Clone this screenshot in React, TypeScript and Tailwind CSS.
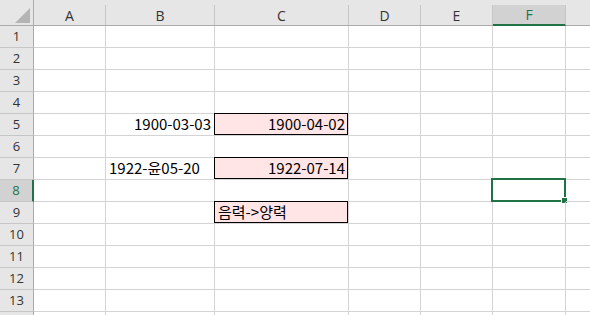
import React from 'react'

const cols = [
  { key: 'A', w: 'w-[72px]' },
  { key: 'B', w: 'w-[109px]' },
  { key: 'C', w: 'w-[134px]' },
  { key: 'D', w: 'w-[72px]' },
  { key: 'E', w: 'w-[72px]' },
  { key: 'F', w: 'w-[73px]' },
  { key: 'G', w: 'w-[73px]' },
]

type Cell = { text: string; align?: 'left' | 'right'; boxed?: boolean }

// sheet contents keyed by "row-col"
const data: Record<string, Cell> = {
  '5-B': { text: '1900-03-03', align: 'right' },
  '5-C': { text: '1900-04-02', align: 'right', boxed: true },
  '7-B': { text: '1922-윤05-20', align: 'left' },
  '7-C': { text: '1922-07-14', align: 'right', boxed: true },
  '9-C': { text: '음력->양력', align: 'left', boxed: true },
}

const activeRow = 8
const activeCol = 'F'

export default function App() {
  const rows = Array.from({ length: 14 }, (_, i) => i + 1)

  return (
    <div className="w-[590px] h-[315px] overflow-hidden bg-white font-['Noto_Sans_CJK_KR','Noto_Sans',sans-serif]">
      {/* column headers */}
      <div className="flex h-[26px] bg-[#e6e6e6] border-b border-[#ababab]">
        <div className="w-[34px] shrink-0 border-r border-[#ababab] flex items-end justify-end pb-[2px] pr-[3px]">
          <svg width="15" height="15" viewBox="0 0 15 15">
            <polygon points="15,0 15,15 0,15" fill="#b4b4b4" />
          </svg>
        </div>
        {cols.map((c) => (
          <div key={c.key} className={`${c.w} shrink-0 flex items-end`}>
            <div
              className={`w-full h-[20px] border-r border-[#c6c6c6] flex items-center justify-center text-[14px] font-['Open_Sans',sans-serif] ${
                c.key === activeCol
                  ? 'bg-[#d2d2d2] text-[#217346] border-b-2 border-b-[#217346] h-[21px] -mb-px'
                  : 'text-[#333333]'
              }`}
            >
              {/* G sits past the window edge, its letter is not in view */}
              {c.key === 'G' ? '' : c.key}
            </div>
          </div>
        ))}
      </div>

      {rows.map((r) => (
        <div key={r} className="flex h-[22px]">
          <div
            className={`w-[34px] shrink-0 border-b border-[#c6c6c6] flex items-center justify-center text-[13px] font-['Open_Sans',sans-serif] ${
              r === activeRow
                ? 'bg-[#d2d2d2] text-[#217346] border-r-2 border-r-[#217346]'
                : 'bg-[#e6e6e6] text-[#333333] border-r border-r-[#ababab]'
            }`}
          >
            {r < 14 ? r : ''}
          </div>
          {cols.map((c) => {
            const cell = data[`${r}-${c.key}`]
            const active = r === activeRow && c.key === activeCol
            return (
              <div
                key={c.key}
                className={`${c.w} shrink-0 relative border-r border-b border-[#d4d4d4] ${cell?.boxed ? 'bg-[#ffe5e5]' : ''}`}
              >
                {cell?.boxed && (
                  <div className="absolute -top-px -left-px w-[calc(100%+1px)] h-[calc(100%+1px)] border border-black" />
                )}
                {cell && (
                  <div
                    className={`relative h-full px-[3px] flex items-end pb-[1px] text-[15px] leading-[20px] text-black whitespace-nowrap ${
                      cell.align === 'right' ? 'justify-end' : 'justify-start'
                    }`}
                  >
                    {cell.text}
                  </div>
                )}
                {active && (
                  <>
                    <div className="absolute -top-[2px] -left-[2px] w-[calc(100%+3px)] h-[calc(100%+3px)] border-2 border-[#217346]" />
                    <div className="absolute -right-[3px] -bottom-[3px] w-[7px] h-[7px] bg-[#217346] border border-white" />
                  </>
                )}
              </div>
            )
          })}
        </div>
      ))}
    </div>
  )
}
